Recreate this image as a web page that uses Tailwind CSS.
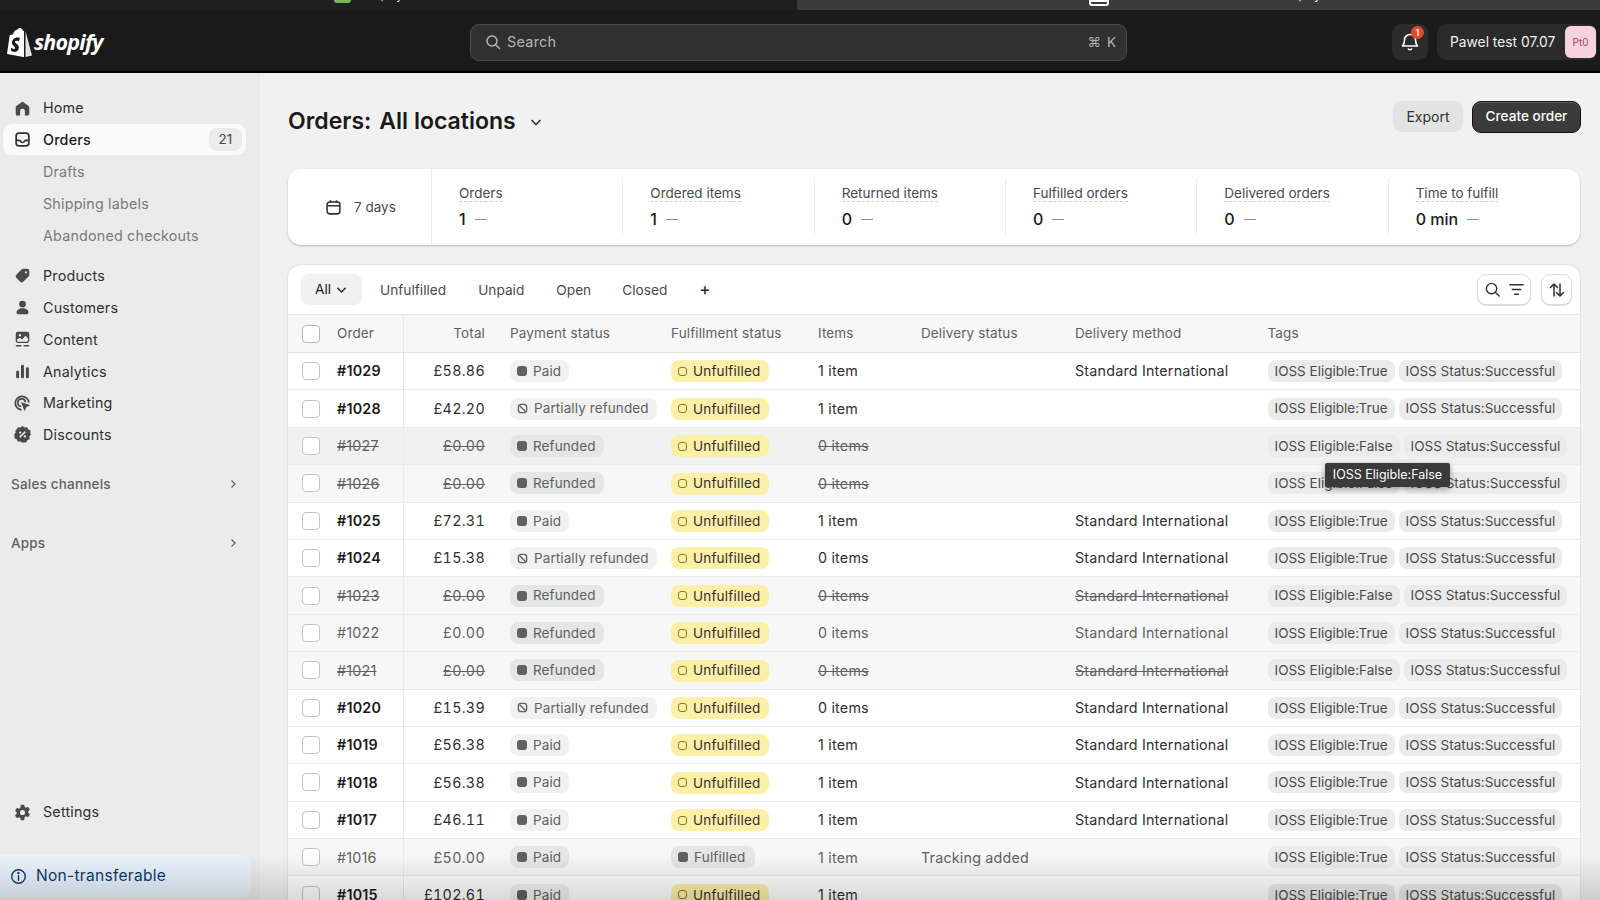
<!DOCTYPE html>
<html lang="en">
<head>
  <meta charset="UTF-8" />
  <title>Orders</title>
  <script src="https://cdn.jsdelivr.net/npm/@tailwindcss/browser@4"></script>
</head>
<body class="h-screen overflow-hidden relative flex flex-col bg-[#f1f1f1] font-['Inter',sans-serif] text-[14.3px] tracking-[0.2px] text-[#303030]">

  <!-- browser tab strip, cut off at the top -->
  <div class="h-[10px] flex shrink-0 overflow-hidden">
    <div class="w-[797px] bg-[#1f1f1f] relative">
      <div class="absolute left-[334px] top-0 w-[17px] h-[3px] rounded-b-sm bg-[#7ab55c]"></div>
      <span class="absolute left-[358px] top-[-14px] text-[12px] text-[#d8d8d8]">Shopify</span>
    </div>
    <div class="flex-1 bg-[#3b3b3b] relative">
      <div class="absolute left-[292px] top-0 w-[20px] h-[6px] rounded-b-[3px] border-2 border-white"></div>
      <span class="absolute left-[479px] top-[-14px] text-[12px] text-white">Shopify</span>
    </div>
  </div>

  <header class="h-[63px] shrink-0 pt-[3px] flex items-center bg-[#1a1a1a] border-b-2 border-black relative">
    <div class="w-[470px] pl-[7px] flex items-center gap-[2px] text-white">
      <svg class="w-[25px] h-[30px]" viewBox="0 0 25 30"><path fill="#fff" d="M17.5 4.2 16 3.8C15.4 2 14.3 1 13 1c-.9 0-1.8.5-2.5 1.4C8.300 2.600 6.600 4.500 6 7.200L2.700 8.200 0 27l17 3.100V4.200z"/><path fill="#e4e4e4" d="M18.500 4.300 25 28.500 18.500 30z"/><path fill="#1a1a1a" d="M12.800 11.500l-.9 2.800s-1-.5-2.100-.5c-1.700 0-1.800 1-1.800 1.300 0 1.400 3.800 2 3.800 5.400 0 2.700-1.700 4.400-4 4.400-2.700 0-4.100-1.700-4.100-1.700l.7-2.400s1.400 1.200 2.600 1.200c.8 0 1.100-.6 1.100-1.100 0-1.900-3.100-2-3.100-5.100 0-2.600 1.900-5.200 5.700-5.200 1.400 0 2.100.4 2.100.4z"/></svg>
      <span class="font-['Open_Sans',sans-serif] font-bold italic text-[21.5px] tracking-[-0.8px]">shopify</span>
    </div>
    <div class="w-[657px] h-[37px] flex items-center justify-between pl-[14px] pr-[9px] rounded-[9px] bg-[#303030] border border-[#4a4a4a] text-[#b5b5b5] text-[14.5px]">
      <div class="flex items-center gap-[6px]">
        <svg class="w-[16px] h-[16px]" viewBox="0 0 16 16" fill="none" stroke="#b5b5b5" stroke-width="1.500"><circle cx="7" cy="7" r="5"/><path d="m11 11 3.500 3.500" stroke-linecap="round"/></svg>
        <span>Search</span>
      </div>
      <span class="text-[13.500px] tracking-[1px]">⌘ K</span>
    </div>
    <div class="ml-auto mr-[3px] flex items-center gap-[9px]">
      <div class="w-[36px] h-[36px] rounded-[9px] bg-[#2b2b2b] flex items-center justify-center relative">
        <svg class="w-[20px] h-[20px]" viewBox="0 0 20 20" fill="none" stroke="#fff" stroke-width="1.600" stroke-linejoin="round"><path d="M4.500 8a5.500 5.500 0 0 1 11 0c0 3 .8 4.500 2 6H2.500c1.200-1.500 2-3 2-6z"/><path d="M8 16.500a2.200 2.200 0 0 0 4 0"/></svg>
        <span class="absolute top-[2px] right-[4px] w-[13px] h-[13px] rounded-full bg-[#e5492a] text-white text-[9px] font-semibold flex items-center justify-center">1</span>
      </div>
      <div class="w-[160px] h-[36px] rounded-[9px] bg-[#2b2b2b] flex items-center justify-between pl-[13px] pr-[1px] text-[#f1f1f1] text-[13.800px] tracking-normal">
        <span>Pawel test 07.07</span>
        <span class="w-[31px] h-[32px] rounded-[6px] bg-[#f7d3e0] text-[#b03a66] text-[10px] flex items-center justify-center">Pt0</span>
      </div>
    </div>
  </header>

  <div class="flex-1 flex min-h-0">
    <aside class="w-[260px] shrink-0 bg-[#ebebeb] relative pt-[19px] text-[#303030]">
      <nav class="flex flex-col">
        <a class="h-[32px] flex items-center gap-[12px] pl-[14px]">
          <svg class="w-[17px] h-[17px]" viewBox="0 0 20 20" fill="#4a4a4a"><path d="M8.900 2.500a1.800 1.800 0 0 1 2.200 0l5.700 4.300c.7.500 1.200 1.300 1.200 2.200v7.500c0 1-.8 1.800-1.800 1.800h-3.400v-5.300a2.800 2.800 0 0 0-5.600 0v5.300H3.800c-1 0-1.800-.8-1.800-1.800V9c0-.9.4-1.700 1.200-2.200z"/></svg>
          <span>Home</span>
        </a>
        <a class="h-[31px] ml-[3px] w-[243px] rounded-[9px] bg-[#fafafa] flex items-center gap-[12px] pl-[11px] pr-[4px] font-medium text-[#1a1a1a]">
          <svg class="w-[17px] h-[17px]" viewBox="0 0 20 20" fill="none" stroke="#303030" stroke-width="2"><rect x="2.500" y="2.500" width="15" height="15" rx="3.500"/><path d="M3 11h3.200c.7 0 1 .5 1.300 1 .5.900 1.300 1.500 2.500 1.500s2-.6 2.500-1.500c.3-.5.6-1 1.300-1H17"/></svg>
          <span>Orders</span>
          <span class="ml-auto w-[33px] h-[23px] rounded-[8px] bg-[#ebebeb] text-[#4a4a4a] font-normal text-[13.500px] flex items-center justify-center">21</span>
        </a>
        <a class="h-[32px] mt-[1px] flex items-center pl-[43px] text-[#7a7a7a]">Drafts</a>
        <a class="h-[32px] flex items-center pl-[43px] text-[#7a7a7a]">Shipping labels</a>
        <a class="h-[32px] flex items-center pl-[43px] text-[#7a7a7a]">Abandoned checkouts</a>
      </nav>
      <nav class="flex flex-col mt-[8px]">
        <a class="h-[31.800px] flex items-center gap-[12px] pl-[14px]">
          <svg class="w-[17px] h-[17px]" viewBox="0 0 20 20" fill="#4a4a4a"><path fill-rule="evenodd" d="M11 2h4.500A2.500 2.500 0 0 1 18 4.500V9c0 .8-.3 1.500-.9 2.100l-6 6a2.800 2.800 0 0 1-4 0l-4.200-4.200a2.800 2.800 0 0 1 0-4l6-6C9.500 2.300 10.200 2 11 2zm3 3a1.200 1.200 0 1 0 0 2.500A1.200 1.200 0 0 0 14 5z"/></svg>
          <span>Products</span>
        </a>
        <a class="h-[31.800px] flex items-center gap-[12px] pl-[14px]">
          <svg class="w-[17px] h-[17px]" viewBox="0 0 20 20" fill="#4a4a4a"><circle cx="10" cy="6" r="4"/><path d="M3 16c0-3 3-5 7-5s7 2 7 5c0 1.200-1 2-2 2H5c-1 0-2-.8-2-2z"/></svg>
          <span>Customers</span>
        </a>
        <a class="h-[31.800px] flex items-center gap-[12px] pl-[14px]">
          <svg class="w-[17px] h-[17px]" viewBox="0 0 20 20" fill="#4a4a4a"><path fill-rule="evenodd" d="M4.500 1h11A2.500 2.500 0 0 1 18 3.500v8a2.500 2.500 0 0 1-2.500 2.500h-11A2.500 2.500 0 0 1 2 11.500v-8A2.500 2.500 0 0 1 4.500 1zm-1 9v1.500c0 .6.4 1 1 1h11c.6 0 1-.4 1-1V8.500l-3-3-4 4.500-2.500-2zM7 3.500a1.500 1.500 0 1 0 0 3 1.500 1.500 0 0 0 0-3z"/><rect x="2" y="16.500" width="7" height="1.800" rx=".9"/><rect x="11" y="16.500" width="7" height="1.800" rx=".9"/></svg>
          <span>Content</span>
        </a>
        <a class="h-[31.800px] flex items-center gap-[12px] pl-[14px]">
          <svg class="w-[17px] h-[17px]" viewBox="0 0 20 20" fill="#4a4a4a"><rect x="2.500" y="9" width="3.500" height="9" rx="1.500"/><rect x="8.200" y="2" width="3.500" height="16" rx="1.500"/><rect x="14" y="5" width="3.500" height="13" rx="1.500"/></svg>
          <span>Analytics</span>
        </a>
        <a class="h-[31.800px] flex items-center gap-[12px] pl-[14px]">
          <svg class="w-[17px] h-[17px]" viewBox="0 0 20 20" fill="none" stroke="#4a4a4a" stroke-width="2"><path d="M9 17.500A8 8 0 1 1 17.500 9"/><path d="M8.500 13.500A4.500 4.500 0 1 1 13.500 8.500"/><path fill="#4a4a4a" stroke-width="1" d="m9 9 9 3.200-3.800 1.700L12.500 18z"/></svg>
          <span>Marketing</span>
        </a>
        <a class="h-[31.800px] flex items-center gap-[11px] pl-[13px]">
          <svg class="w-[19px] h-[19px]" viewBox="0 0 20 20"><path fill="#4a4a4a" d="M10 1l2.200 1.600 2.700-.3 1.100 2.500 2.500 1.100-.3 2.700L19 10l-1.800 2.200.3 2.700-2.500 1.100-1.100 2.500-2.700-.3L10 19l-2.200-1.800-2.700.3L4 15l-2.500-1.100.3-2.700L1 10l1.800-1.800-.3-2.700L4 4.400l1.100-2.100 2.700.3z"/><path stroke="#ebebeb" stroke-width="1.500" stroke-linecap="round" d="m7.500 12.500 5-5"/><circle cx="7.500" cy="8" r="1.200" fill="#ebebeb"/><circle cx="12.500" cy="12" r="1.200" fill="#ebebeb"/></svg>
          <span>Discounts</span>
        </a>
      </nav>
      <div class="mt-[17px] h-[32px] flex items-center justify-between pl-[11px] pr-[21px] text-[13.500px] font-medium text-[#616161]">
        <span>Sales channels</span>
        <svg class="w-[12px] h-[12px]" viewBox="0 0 12 12" fill="none" stroke="#616161" stroke-width="1.200"><path d="m4.500 2.500 3.500 3.500-3.500 3.500"/></svg>
      </div>
      <div class="mt-[27px] h-[32px] flex items-center justify-between pl-[11px] pr-[21px] text-[13.500px] font-medium text-[#616161]">
        <span>Apps</span>
        <svg class="w-[12px] h-[12px]" viewBox="0 0 12 12" fill="none" stroke="#616161" stroke-width="1.200"><path d="m4.500 2.500 3.500 3.500-3.500 3.500"/></svg>
      </div>
      <a class="absolute left-0 top-[723px] h-[32px] flex items-center gap-[12px] pl-[14px]">
        <svg class="w-[17px] h-[17px]" viewBox="0 0 20 20" fill="#4a4a4a"><path fill-rule="evenodd" d="M8 1h4l.6 2.500 1.700.8 2.300-1.200 2.200 3.500-2 1.700v2l2 1.900-2.200 3.400-2.300-1.200-1.700.8L12 19H8l-.6-2.500-1.700-.8-2.300 1.200L1.200 13.500l2-1.900v-2l-2-1.700 2.200-3.500 2.300 1.200 1.700-.8zM10 7a3 3 0 1 0 0 6 3 3 0 0 0 0-6z"/></svg>
        <span>Settings</span>
      </a>
      <div class="absolute left-0 top-[782px] w-[251px] h-[42px] rounded-r-[10px] bg-[#e9f2fb] flex items-center gap-[9px] pl-[10px] text-[#0b3a6f] text-[15.500px] tracking-[0.3px]">
        <svg class="w-[17px] h-[17px]" viewBox="0 0 20 20" fill="none" stroke="#0b3a6f" stroke-width="1.600"><circle cx="10" cy="10" r="8"/><path d="M10 9v5.500" stroke-linecap="round"/><circle cx="10" cy="6" r=".6" fill="#0b3a6f"/></svg>
        <span>Non-transferable</span>
      </div>
    </aside>

    <main class="flex-1 min-w-0 pl-[28px] pr-[20px] pt-[27px]">
      <div class="h-[33px] flex items-center justify-between">
        <div class="mt-[10px] flex items-center text-[23px] font-semibold tracking-normal text-[#1a1a1a]">
          <span class="mr-[8px]">Orders:</span>
          <span>All locations</span>
          <svg class="w-[16px] h-[16px] ml-[12px]" viewBox="0 0 16 16" fill="none" stroke="#303030" stroke-width="1.600"><path d="m3.500 6 4.500 4.500L12.500 6"/></svg>
        </div>
        <div class="-mr-[1px] flex items-center gap-[9px] tracking-normal">
          <button class="w-[70px] h-[31px] rounded-[9px] bg-[#e3e3e3] text-[14px] font-normal text-[#303030]">Export</button>
          <button class="w-[109px] h-[32px] rounded-[9px] bg-[#3b3b3b] border border-[#111] text-[13.600px] font-medium text-white shadow-[inset_0_1px_0_rgba(255,255,255,0.2)]">Create order</button>
        </div>
      </div>

      <section class="mt-[36px] h-[76px] rounded-[13px] bg-white shadow-[0_1px_2px_rgba(0,0,0,0.25)] flex items-center tracking-normal">
        <div class="w-[144px] h-full flex items-center gap-[12px] pl-[37px] border-r border-[#ebebeb] text-[13.500px] text-[#4a4a4a]">
          <svg class="w-[17px] h-[17px]" viewBox="0 0 20 20" fill="none" stroke="#303030" stroke-width="1.800"><rect x="2.500" y="3.500" width="15" height="14" rx="3"/><path d="M2.500 8h15M6.500 1.500v3M13.500 1.500v3"/></svg>
          <span>7 days</span>
        </div>
        <div class="flex-1 grid grid-cols-6 h-[58px]">
          <div class="pl-[27px] pt-[4px] border-r border-[#ebebeb]"><span class="text-[13.500px] text-[#4a4a4a] border-b border-dashed border-[#cccccc]">Orders</span><div class="mt-[4px] flex items-center gap-[9px] text-[16px] font-medium text-[#1a1a1a]">1 <span class="w-[12px] h-[1.500px] bg-[#8a8a8a]"></span></div></div>
          <div class="pl-[27px] pt-[4px] border-r border-[#ebebeb]"><span class="text-[13.500px] text-[#4a4a4a] border-b border-dashed border-[#cccccc]">Ordered items</span><div class="mt-[4px] flex items-center gap-[9px] text-[16px] font-medium text-[#1a1a1a]">1 <span class="w-[12px] h-[1.500px] bg-[#8a8a8a]"></span></div></div>
          <div class="pl-[27px] pt-[4px] border-r border-[#ebebeb]"><span class="text-[13.500px] text-[#4a4a4a] border-b border-dashed border-[#cccccc]">Returned items</span><div class="mt-[4px] flex items-center gap-[9px] text-[16px] font-medium text-[#1a1a1a]">0 <span class="w-[12px] h-[1.500px] bg-[#8a8a8a]"></span></div></div>
          <div class="pl-[27px] pt-[4px] border-r border-[#ebebeb]"><span class="text-[13.500px] text-[#4a4a4a] border-b border-dashed border-[#cccccc]">Fulfilled orders</span><div class="mt-[4px] flex items-center gap-[9px] text-[16px] font-medium text-[#1a1a1a]">0 <span class="w-[12px] h-[1.500px] bg-[#8a8a8a]"></span></div></div>
          <div class="pl-[27px] pt-[4px] border-r border-[#ebebeb]"><span class="text-[13.500px] text-[#4a4a4a] border-b border-dashed border-[#cccccc]">Delivered orders</span><div class="mt-[4px] flex items-center gap-[9px] text-[16px] font-medium text-[#1a1a1a]">0 <span class="w-[12px] h-[1.500px] bg-[#8a8a8a]"></span></div></div>
          <div class="pl-[27px] pt-[4px]"><span class="text-[13.500px] text-[#4a4a4a] border-b border-dashed border-[#cccccc]">Time to fulfill</span><div class="mt-[4px] flex items-center gap-[9px] text-[16px] font-medium text-[#1a1a1a]">0 min <span class="w-[12px] h-[1.500px] bg-[#8a8a8a]"></span></div></div>
        </div>
      </section>

      <section class="mt-[20px] rounded-t-[13px] bg-white shadow-[0_0_2px_rgba(0,0,0,0.2)] relative">
        <div class="h-[49px] flex items-center pl-[13px] pr-[8px] text-[13.700px] tracking-normal text-[#4a4a4a]">
          <div class="w-[61px] h-[31px] rounded-[8px] bg-[#f1f1f1] flex items-center justify-center gap-[4px] text-[#1a1a1a]">All
            <svg class="w-[13px] h-[13px]" viewBox="0 0 16 16" fill="none" stroke="#303030" stroke-width="1.800"><path d="m3 6 5 5 5-5"/></svg>
          </div>
          <span class="ml-[18px] mt-[2px]">Unfulfilled</span>
          <span class="ml-[32px] mt-[2px]">Unpaid</span>
          <span class="ml-[32px] mt-[2px]">Open</span>
          <span class="ml-[31px] mt-[2px]">Closed</span>
          <span class="ml-[32px] text-[17px] font-medium text-[#303030]">+</span>
          <div class="ml-auto flex gap-[10px]">
            <div class="w-[54px] h-[31px] rounded-[9px] bg-white border border-[#dcdcdc] shadow-[0_1px_1px_rgba(0,0,0,0.15)] flex items-center justify-center gap-[7px]">
              <svg class="w-[17px] h-[17px]" viewBox="0 0 18 18" fill="none" stroke="#303030" stroke-width="1.500"><circle cx="8" cy="8" r="5.500"/><path d="m12 12 4 4" stroke-linecap="round"/></svg>
              <svg class="w-[17px] h-[17px]" viewBox="0 0 18 18" fill="none" stroke="#303030" stroke-width="1.500" stroke-linecap="round"><path d="M2 4h14M4.500 9h9M7 14h4"/></svg>
            </div>
            <div class="w-[31px] h-[31px] rounded-[9px] bg-white border border-[#dcdcdc] shadow-[0_1px_1px_rgba(0,0,0,0.15)] flex items-center justify-center">
              <svg class="w-[18px] h-[18px]" viewBox="0 0 18 18" fill="none" stroke="#303030" stroke-width="1.500" stroke-linecap="round" stroke-linejoin="round"><path d="M6 15V3M2.500 6.500 6 3l3.500 3.500M12 3v12M8.500 11.500 12 15l3.500-3.500"/></svg>
            </div>
          </div>
        </div>
        <div class="grid grid-cols-[49px_67px_106px_161px_147px_103px_154px_192.500px_1fr] h-[39px] items-center bg-[#f7f7f7] border-y border-[#e3e3e3] text-[13.500px] tracking-[0.13px] text-[#616161]">
          <div class="pl-[14px]"><span class="block w-[18px] h-[18px] rounded-[4px] bg-white border border-[#b5b5b5]"></span></div>
          <div class="h-full flex items-center border-r border-[#e9e9e9]">Order</div>
          <div class="pr-[25px] text-right">Total</div>
          <div>Payment status</div>
          <div>Fulfillment status</div>
          <div>Items</div>
          <div>Delivery status</div>
          <div>Delivery method</div>
          <div>Tags</div>
        </div>
        <div id="rows"></div>
        <!-- tooltip over the #1026 tags -->
        <div class="absolute left-[1037px] top-[198px] w-[125px] h-[24px] bg-[#3a3a3a] rounded-[2px] shadow-[0_2px_6px_rgba(0,0,0,0.35)] text-white text-[12.500px] tracking-normal flex items-center justify-center">IOSS Eligible:False</div>
      </section>
    </main>
  </div>

  <!-- the dark fade along the bottom of the screen -->
  <div class="absolute left-0 right-0 bottom-0 h-[45px] pointer-events-none bg-gradient-to-b from-black/0 to-black/15"></div>

  <script>
    const rows = [
      ['#1029', '£58.86', 'Paid', 'U', '1 item', '', 'S', 'True', 'live'],
      ['#1028', '£42.20', 'Partially refunded', 'U', '1 item', '', '', 'True', 'live'],
      ['#1027', '£0.00', 'Refunded', 'U', '0 items', '', '', 'False', 'hover'],
      ['#1026', '£0.00', 'Refunded', 'U', '0 items', '', '', 'False', 'struck'],
      ['#1025', '£72.31', 'Paid', 'U', '1 item', '', 'S', 'True', 'live'],
      ['#1024', '£15.38', 'Partially refunded', 'U', '0 items', '', 'S', 'True', 'live'],
      ['#1023', '£0.00', 'Refunded', 'U', '0 items', '', 'S', 'False', 'struck'],
      ['#1022', '£0.00', 'Refunded', 'U', '0 items', '', 'S', 'True', 'closed'],
      ['#1021', '£0.00', 'Refunded', 'U', '0 items', '', 'S', 'False', 'struck'],
      ['#1020', '£15.39', 'Partially refunded', 'U', '0 items', '', 'S', 'True', 'live'],
      ['#1019', '£56.38', 'Paid', 'U', '1 item', '', 'S', 'True', 'live'],
      ['#1018', '£56.38', 'Paid', 'U', '1 item', '', 'S', 'True', 'live'],
      ['#1017', '£46.11', 'Paid', 'U', '1 item', '', 'S', 'True', 'live'],
      ['#1016', '£50.00', 'Paid', 'F', '1 item', 'Tracking added', '', 'True', 'closed'],
      ['#1015', '£102.61', 'Paid', 'U', '1 item', '', '', 'True', 'live'],
    ];

    const rowHtml = ([id, total, pay, ful, items, delivery, method, eligible, state]) => {
      const live = state === 'live';
      const struck = state === 'struck' || state === 'hover';
      const bg = live ? 'bg-white' : state === 'hover' ? 'bg-[#f1f1f1]' : 'bg-[#f7f7f7]';
      const text = live ? 'text-[#303030]' : 'text-[#616161]';
      const line = struck ? 'line-through' : '';
      const idCls = live ? 'font-semibold text-[#1a1a1a]' : 'text-[#616161]';
      const badge = live ? 'bg-[#f1f1f1]' : 'bg-[#e6e6e6]';
      const payIcon = pay === 'Partially refunded'
        ? '<svg class="w-[11px] h-[11px]" viewBox="0 0 12 12" fill="none" stroke="#616161" stroke-width="1.500"><rect x="1.500" y="1.500" width="9" height="9" rx="3"/><path d="m3 3 6 6"/></svg>'
        : '<span class="w-[10px] h-[10px] rounded-[3px] bg-[#616161]"></span>';
      const fulBadge = ful === 'U'
        ? '<span class="inline-flex items-center gap-[6px] h-[22px] pl-[7px] pr-[9px] rounded-[8px] bg-[#fcefa8] text-[#303030] text-[13.500px]"><span class="w-[9px] h-[9px] rounded-[3px] border-[1.500px] border-[#8a7a1e]"></span>Unfulfilled</span>'
        : '<span class="inline-flex items-center gap-[6px] h-[22px] pl-[7px] pr-[9px] rounded-[8px] bg-[#e6e6e6] text-[#616161] text-[13.500px]"><span class="w-[10px] h-[10px] rounded-[3px] bg-[#616161]"></span>Fulfilled</span>';
      return `
        <div class="grid grid-cols-[49px_67px_106px_161px_147px_103px_154px_192.500px_1fr] h-[37.4px] items-center border-b border-[#ebebeb] ${bg} ${text}">
          <div class="pl-[14px]"><span class="block w-[18px] h-[18px] rounded-[4px] bg-white border border-[#c4c4c4]"></span></div>
          <div class="h-full flex items-center border-r border-[#ebebeb] ${idCls} ${line}">${id}</div>
          <div class="pr-[25px] text-right tabular-nums tracking-[0.3px] ${line}">${total}</div>
          <div><span class="inline-flex items-center gap-[6px] h-[22px] pl-[7px] pr-[8px] rounded-[8px] ${badge} text-[#616161] text-[13.500px] tracking-[0.1px]">${payIcon}${pay}</span></div>
          <div>${fulBadge}</div>
          <div class="${line}">${items}</div>
          <div>${delivery}</div>
          <div class="${line}">${method ? 'Standard International' : ''}</div>
          <div class="flex gap-[4px] text-[13.500px] tracking-normal text-[#4a4a4a] whitespace-nowrap">
            <span class="h-[22px] px-[7px] rounded-[8px] bg-[#ebebeb] flex items-center">IOSS Eligible:${eligible}</span>
            <span class="h-[22px] px-[7px] rounded-[8px] bg-[#ebebeb] flex items-center">IOSS Status:Successful</span>
          </div>
        </div>`;
    };

    document.getElementById('rows').innerHTML = rows.map(rowHtml).join('');
  </script>
</body>
</html>
